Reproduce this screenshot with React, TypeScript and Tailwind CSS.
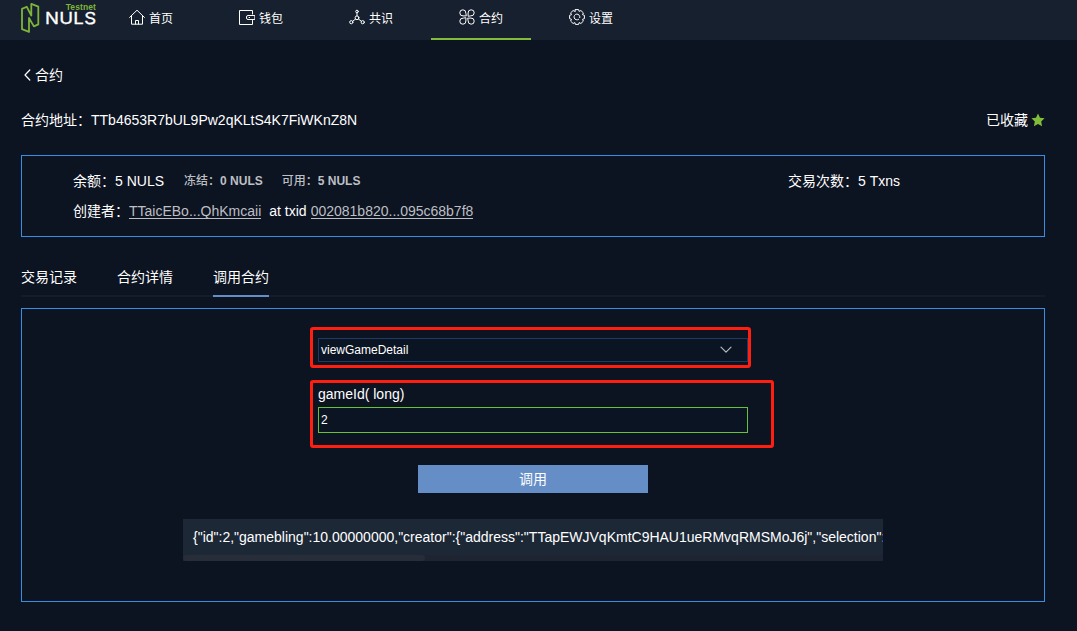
import React from 'react';

const line = {
  fill: 'none',
  stroke: 'currentColor',
  strokeWidth: 1,
  strokeLinecap: 'round' as const,
  strokeLinejoin: 'round' as const,
};

function HomeIcon() {
  return (
    <svg width="16" height="16" viewBox="0 0 16 16" {...line}>
      <path d="M.6 8.4 8 1.2l7.4 7.2M2.5 7v8.2h11V7M6.5 15v-3.5h3V15" />
    </svg>
  );
}

function WalletIcon() {
  return (
    <svg width="16" height="16" viewBox="0 0 16 16" {...line}>
      <path d="M13.5 5V1.5h-13v14h13V11.5M15.5 6.5H9a1.5 1.5 0 0 0-1.5 1.5v1A1.5 1.5 0 0 0 9 10.5h6.5zM10 8.5h.6" />
    </svg>
  );
}

function ConsensusIcon() {
  return (
    <svg width="16" height="16" viewBox="0 0 16 16" {...line}>
      <circle cx="8" cy="2.5" r="1.3" />
      <circle cx="8" cy="8.8" r="1.9" />
      <circle cx="2.3" cy="13.2" r="1.6" />
      <circle cx="13.7" cy="13.2" r="1.6" />
      <path d="M8 3.9v3M6.5 10.1l-2.8 2.1M9.5 10.1l2.8 2.1" />
    </svg>
  );
}

function ContractIcon() {
  return (
    <svg width="16" height="16" viewBox="0 0 16 16" {...line}>
      <path d="M6.9 6.9H4A3.05 3.05 0 1 1 6.9 4zM9.1 6.9V4A3.05 3.05 0 1 1 12 6.9zM6.9 9.1V12A3.05 3.05 0 1 1 4 9.1zM9.1 9.1H12A3.05 3.05 0 1 1 9.1 12z" />
    </svg>
  );
}

function GearIcon() {
  return (
    <svg width="16" height="16" viewBox="0 0 16 16" {...line}>
      <path d="M6.4.6h3.2l.5 1.8 1.8-.9 2.5 2.4-.9 1.8 1.9.6v3.4l-1.9.6.9 1.8-2.5 2.4-1.8-.9-.5 1.8H6.4l-.5-1.8-1.8.9-2.5-2.4.9-1.8-1.9-.6V6.3l1.9-.6-.9-1.8 2.5-2.4 1.8.9z" />
      <path d="M9.6 10.4A2.9 2.9 0 1 1 10.8 8.6" />
    </svg>
  );
}

function Logo() {
  return (
    <div className="flex h-10 w-[80px] shrink-0">
      <svg width="20" height="32" viewBox="0 0 20 32" className="mt-[2px]" fill="none" stroke="#7fb43a" strokeWidth="1.8" strokeLinejoin="round">
        <path d="M1 6.9 5.8 4.8 10.3 13.5V1.9L17.3 4.7V22.4L12.9 24.4 8 16V29.9L1 27.2z" />
      </svg>
      <div className="flex w-[55px] flex-col items-end pt-[3px]">
        <span className="h-[9px] text-[8.5px] font-bold leading-[9px] tracking-[0.1px] text-[#7fb43a]">Testnet</span>
        <span className="h-[12px] origin-right scale-x-[1.16] font-['Inter','Liberation_Sans',sans-serif] text-[16px] leading-[12px] tracking-[0.3px] text-white [-webkit-text-stroke:0.3px_#fff]">NULS</span>
      </div>
    </div>
  );
}

const nav = [
  { label: '首页', Icon: HomeIcon },
  { label: '钱包', Icon: WalletIcon },
  { label: '共识', Icon: ConsensusIcon },
  { label: '合约', Icon: ContractIcon, active: true },
  { label: '设置', Icon: GearIcon },
];

const tabs = [{ label: '交易记录' }, { label: '合约详情' }, { label: '调用合约', active: true }];

export default function App() {
  return (
    <div className="h-[631px] w-[1077px] overflow-hidden bg-[#0c1321] font-['Liberation_Sans','Noto_Sans_CJK_SC',sans-serif] text-sm leading-5 text-white">
      <header className="flex h-10 bg-[#17202e] pl-[21px]">
        <Logo />
        <nav className="flex gap-[10px]">
          {nav.map(({ label, Icon, active }) => (
            <a
              key={label}
              className={`flex h-10 w-[100px] items-center justify-center gap-1 border-b-2 pb-[3px] text-xs leading-4 ${active ? 'border-[#82bd39]' : 'border-transparent'}`}
            >
              <span className="-mt-px">
                <Icon />
              </span>
              <span className="pt-[2px]">{label}</span>
            </a>
          ))}
        </nav>
      </header>

      <main className="pl-[21px] pr-8">
        <div className="mt-[25px] flex h-5 items-center gap-1 pl-[2px]">
          <svg width="8" height="12" viewBox="0 0 8 12" {...line} strokeWidth={1.2}>
            <path d="M6.8 1 2 6l4.8 5" />
          </svg>
          <span>合约</span>
        </div>

        <div className="mt-[25px] flex h-5 items-center justify-between">
          <span>合约地址：TTb4653R7bUL9Pw2qKLtS4K7FiWKnZ8N</span>
          <span className="flex items-center gap-[3px]">
            已收藏
            <svg width="14" height="14" viewBox="0 0 14 14" fill="#82bd39">
              <path d="m7 .5 2 4.3 4.6.5-3.4 3.2.9 4.7L7 10.9l-4.1 2.3.9-4.7L.4 5.3 5 4.8z" />
            </svg>
          </span>
        </div>

        <section className="mt-[25px] flex h-[82px] border border-[#388ee5] pl-[51px] pt-[15px]">
          <div className="w-[715px]">
            <div className="flex h-5 items-center">
              <span>余额：5 NULS</span>
              <span className="ml-5 text-xs font-bold text-[#bdbfc3]"><span className="font-medium">冻结：</span>0 NULS</span>
              <span className="ml-[19px] text-xs font-bold text-[#bdbfc3]"><span className="font-medium">可用：</span>5 NULS</span>
            </div>
            <div className="mt-[10px] flex h-5 items-center">
              <span>创建者：</span>
              <a className="mt-px border-b border-[#bdbfc3] leading-[14px] text-[#bdbfc3]">TTaicEBo...QhKmcaii</a>
              <span className="ml-2 mr-1">at txid</span>
              <a className="mt-px border-b border-[#bdbfc3] leading-[14px] text-[#bdbfc3]">002081b820...095c68b7f8</a>
            </div>
          </div>
          <span>交易次数：5 Txns</span>
        </section>

        <div className="mt-[30px] flex h-[30px] gap-10 shadow-[inset_0_-2px_0_#151c29]">
          {tabs.map(({ label, active }) => (
            <button
              key={label}
              className={`flex h-[30px] items-start border-b-2 ${active ? 'border-[#658ec7]' : 'border-transparent'}`}
            >
              {label}
            </button>
          ))}
        </div>

        <section className="mt-[11px] flex h-[294px] flex-col border border-[#388ee5]">
          <div className="relative ml-[296px] mt-[29px] flex h-6 w-[430px] items-center justify-between border border-[#1f3a62] bg-[#0b1422] pl-[2px] pr-[15px] text-xs">
            <span>viewGameDetail</span>
            <svg width="12" height="8" viewBox="0 0 12 8" className="-mt-px text-[#b7bbc2]" {...line} strokeWidth={1.2}>
              <path d="m1 1.2 5 5 5-5" />
            </svg>
            <div className="pointer-events-none absolute -left-[9px] -top-3 h-[41px] w-[441px] rounded-[3px] border-[3px] border-[#fe1f10]" />
          </div>
          <div className="relative ml-[296px] mt-[22px] w-[430px]">
            <label className="block h-[23px]">gameId( long)</label>
            <div className="flex h-[26px] items-center border border-[#67c23a] bg-[#0b1422] pl-[2px] text-xs">2</div>
            <div className="pointer-events-none absolute -left-2 -top-1 h-[68px] w-[464px] rounded-[3px] border-[3px] border-[#fe1f10]" />
          </div>
          <button className="ml-[396px] mt-8 h-7 w-[230px] bg-[#658ec7]">调用</button>
          <div className="ml-[161px] mt-[26px] flex h-[42px] w-[700px] flex-col overflow-hidden bg-[#1d2836]">
            <div className="h-9 whitespace-nowrap pl-[10px] leading-9">
              {'{"id":2,"gamebling":10.00000000,"creator":{"address":"TTapEWJVqKmtC9HAU1ueRMvqRMSMoJ6j","selection":'}
            </div>
            <div className="h-[6px] bg-[#1e2431]">
              <div className="h-[6px] w-[242px] rounded-[3px] bg-[#272d39]" />
            </div>
          </div>
        </section>
      </main>
    </div>
  );
}
